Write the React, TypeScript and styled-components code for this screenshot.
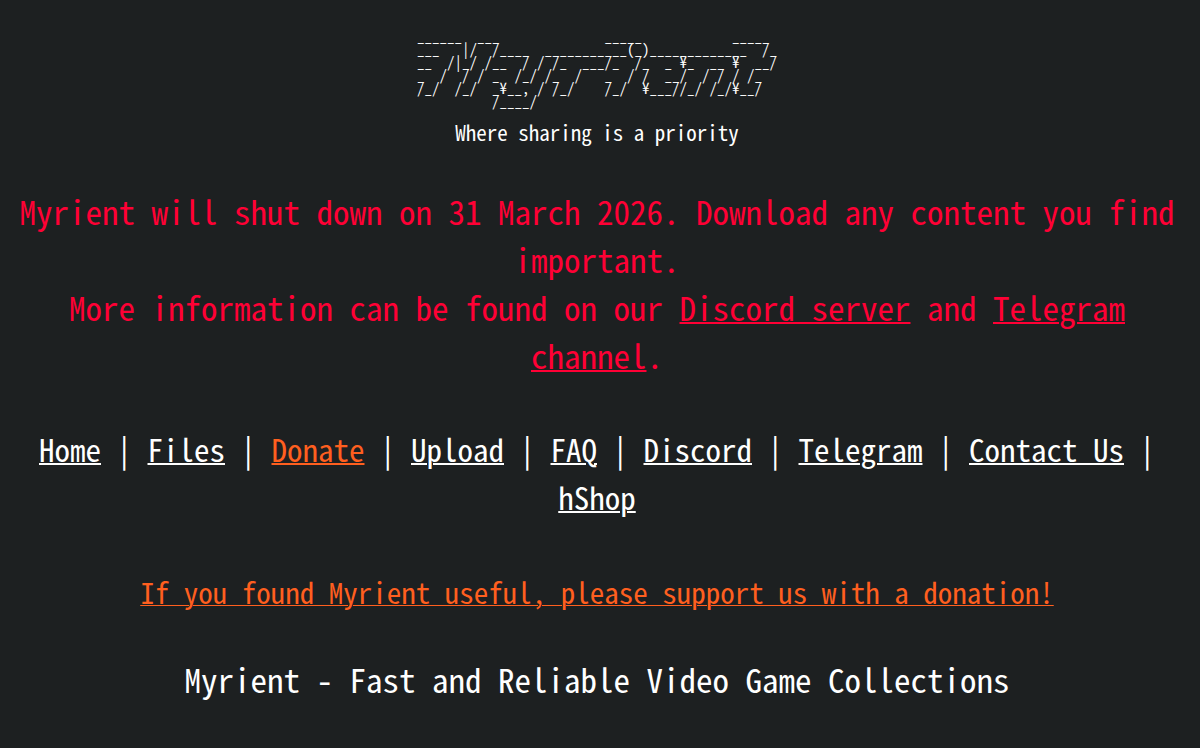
import React from "react";
import styled, { createGlobalStyle } from "styled-components";

const GlobalStyle = createGlobalStyle`
  body {
    margin: 0;
    background: #1d2021;
    color: #ffffff;
    font-family: "Noto Sans Mono CJK JP", "Noto Sans CJK JP", "Liberation Mono", monospace;
  }
`;

const Page = styled.main`
  padding: 29px 10px 40px 4px;
  text-align: center;
`;

const Banner = styled.pre`
  margin: 0;
  font-family: inherit;
  font-size: 15px;
  line-height: 13px;
`;

const BannerArt = styled.span`
  display: inline-block;
  text-align: left;
`;

const Tagline = styled.p`
  margin: 10px 0 0;
  font-size: 21px;
  line-height: 30px;
`;

const Notice = styled.p`
  margin: 40px 0 0;
  color: #ff0035;
  font-size: 33px;
  line-height: 48px;
`;

const Nav = styled.nav`
  margin-top: 46px;
  font-size: 31px;
  line-height: 48px;
`;

const Link = styled.a<{ $accent?: boolean; $thin?: boolean }>`
  color: ${({ $accent }) => ($accent ? "#ff5f1f" : "inherit")};
  text-decoration: underline;
  text-decoration-thickness: ${({ $thin }) => ($thin ? "1px" : "2px")};
  text-underline-offset: 1px;
`;

const Support = styled.p`
  margin: 48px 0 0;
  font-size: 29px;
  line-height: 44px;
`;

const Title = styled.h1`
  margin: 42px 0 0;
  font-size: 33px;
  font-weight: 400;
  line-height: 48px;
`;

const art = [
  "______  ___              _____            _____ ",
  "___   |/  /____  ___________(_)_____________  /_",
  "__  /|_/ /__  / / /_  ___/_  /_  _ ¥_  __ ¥  __/",
  "_  /  / / _  /_/ /_  /   _  / /  __/  / / / /_  ",
  "/_/  /_/  _¥__, / /_/    /_/  ¥___//_/ /_/¥__/  ",
  "          /____/                                ",
].join("\n");

const links = [
  { label: "Home" },
  { label: "Files" },
  { label: "Donate", accent: true },
  { label: "Upload" },
  { label: "FAQ" },
  { label: "Discord" },
  { label: "Telegram" },
  { label: "Contact Us" },
  { label: "hShop" },
];

export default function App() {
  return (
    <>
      <GlobalStyle />
      <Page>
        <header>
          <Banner>
            <BannerArt>{art}</BannerArt>
          </Banner>
          <Tagline>Where sharing is a priority</Tagline>
        </header>
        <Notice>
          Myrient will shut down on 31 March 2026. Download any content you find important.
          <br />
          More information can be found on our <Link href="#discord">Discord server</Link> and{" "}
          <Link href="#telegram">Telegram channel</Link>.
        </Notice>
        <Nav>
          {links.map(({ label, accent }, index) => (
            <React.Fragment key={label}>
              {index > 0 && " | "}
              <Link href={`#${label.toLowerCase().replace(" ", "-")}`} $accent={accent}>
                {label}
              </Link>
            </React.Fragment>
          ))}
        </Nav>
        <Support>
          <Link href="#donate" $accent $thin>
            If you found Myrient useful, please support us with a donation!
          </Link>
        </Support>
        <Title>Myrient - Fast and Reliable Video Game Collections</Title>
      </Page>
    </>
  );
}
